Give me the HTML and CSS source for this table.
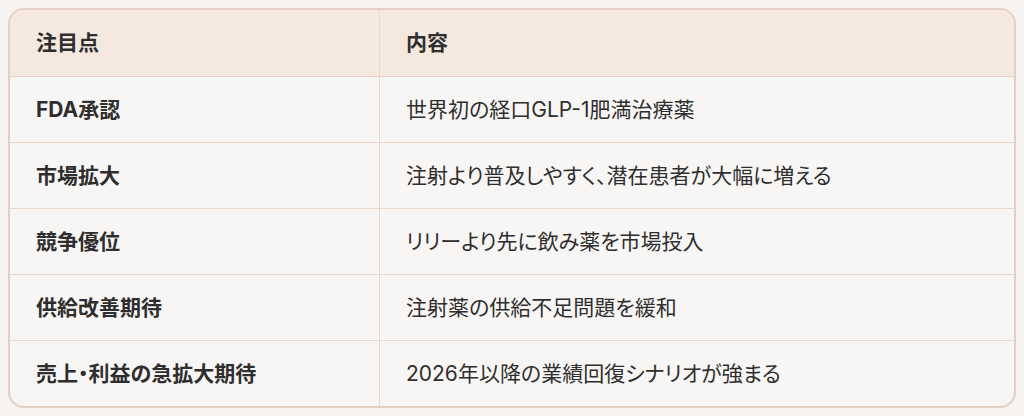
FILE: index.html
```html
<!DOCTYPE html>
<html lang="ja">
<head>
<meta charset="utf-8">
<link rel="stylesheet" href="styles.css">
</head>
<body>
<div class="table">
  <div class="row head">
    <div class="cell key">注目点</div>
    <div class="cell val">内容</div>
  </div>
  <div class="row">
    <div class="cell key">FDA承認</div>
    <div class="cell val">世界初の経口GLP-1肥満治療薬</div>
  </div>
  <div class="row">
    <div class="cell key">市場拡大</div>
    <div class="cell val">注射より普及しやすく、潜在患者が大幅に増える</div>
  </div>
  <div class="row">
    <div class="cell key">競争優位</div>
    <div class="cell val">リリーより先に飲み薬を市場投入</div>
  </div>
  <div class="row">
    <div class="cell key">供給改善期待</div>
    <div class="cell val">注射薬の供給不足問題を緩和</div>
  </div>
  <div class="row">
    <div class="cell key">売上・利益の急拡大期待</div>
    <div class="cell val">2026年以降の業績回復シナリオが強まる</div>
  </div>
</div>
</body>
</html>
```

FILE: styles.css
```css
html, body {
  margin: 0;
  padding: 0;
  background: #f6f3f1;
}
body {
  padding: 8px;
  font-family: "Inter", "Noto Sans CJK JP", sans-serif;
  color: #2e2e2e;
}
.table {
  width: 1008px;
  box-sizing: border-box;
  border: 2px solid #e3cfc2;
  border-radius: 16px;
  overflow: hidden;
  background: #f8f6f4;
}
.row {
  display: grid;
  grid-template-columns: 370px 1fr;
  height: 65px;
  border-bottom: 1px solid #ead8cd;
}
.row:last-child {
  border-bottom: none;
}
.row.head {
  height: 66px;
  background: #f5e8df;
  border-bottom: 1px solid #e6d2c5;
}
.cell {
  display: flex;
  align-items: center;
  padding-left: 26px;
  padding-bottom: 4px;
  font-size: 21px;
  font-feature-settings: "palt";
}
.key {
  font-weight: 700;
  border-right: 1px solid #ead8cd;
}
.val {
  font-weight: 400;
}
.head .val {
  font-weight: 700;
}
```
